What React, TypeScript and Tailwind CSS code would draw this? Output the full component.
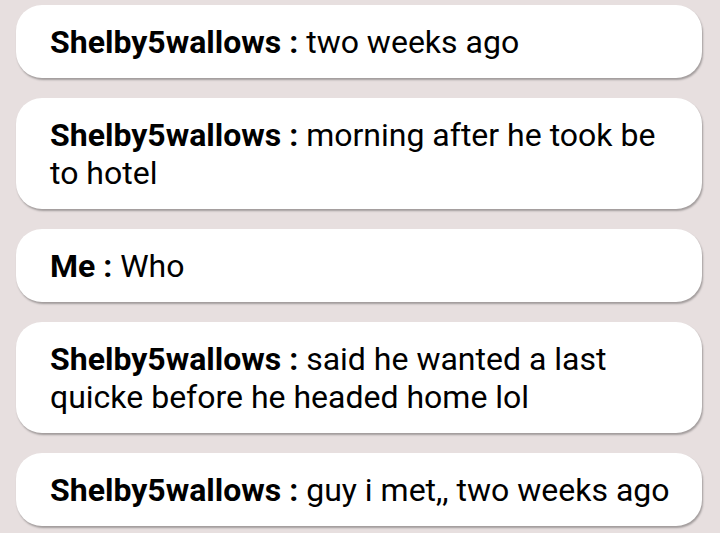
const messages = [
  { from: "Shelby5wallows", text: "two weeks ago" },
  { from: "Shelby5wallows", text: "morning after he took be to hotel" },
  { from: "Me", text: "Who" },
  { from: "Shelby5wallows", text: "said he wanted a last quicke before he headed home lol" },
  { from: "Shelby5wallows", text: "guy i met,, two weeks ago" },
];

const App: React.FC = () => {
  return (
    <div className="min-h-[533px] w-full bg-[#e7dfdf] pt-[5px] px-4 font-['Roboto',sans-serif]">
      <div className="flex flex-col gap-5">
        {messages.map((msg, key) => (
          <div
            key={key}
            className="w-[686px] rounded-[26px] bg-white pl-[34px] pr-[30px] pt-[18px] pb-[17px] shadow-[1px_2px_2px_rgba(0,0,0,0.3)]"
          >
            <p className="text-[32px] leading-[38px] text-black">
              <span className="font-bold">{msg.from} : </span>
              {msg.text}
            </p>
          </div>
        ))}
      </div>
    </div>
  );
};
export default App;
